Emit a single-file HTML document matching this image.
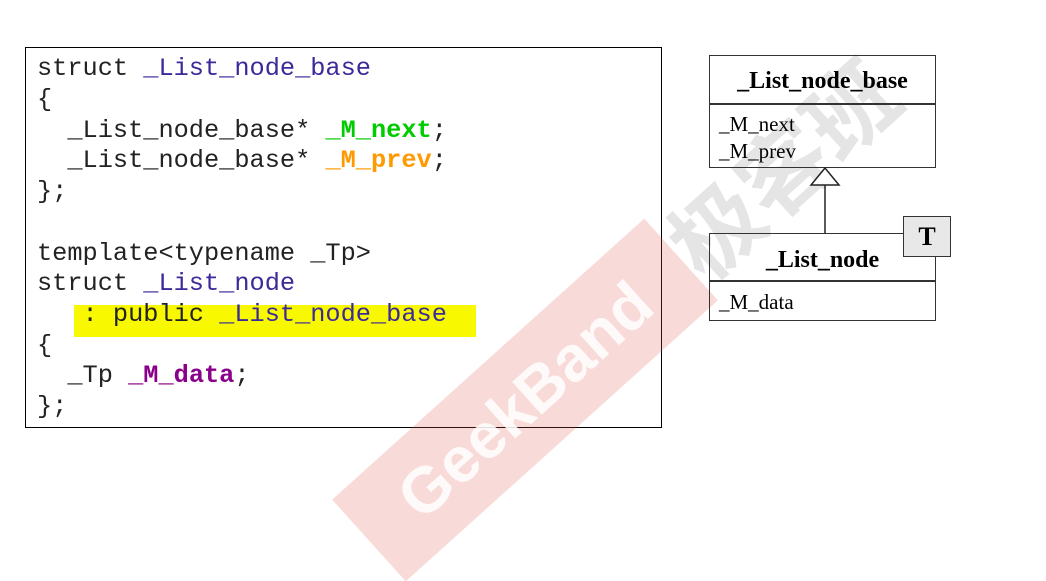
<!DOCTYPE html>
<html><head><meta charset="utf-8"><style>
body{margin:0;width:1046px;height:550px;background:#fff;position:relative;overflow:hidden;font-family:"Liberation Serif",serif}
.code{position:absolute;left:25px;top:47px;width:637px;height:381px;border:1px solid #000;box-sizing:border-box}
.ln{position:absolute;left:37px;font-family:"Liberation Mono",monospace;font-size:25.3px;line-height:30px;white-space:pre;color:#222}
.b{color:#3a2a9a}.g{color:#00cc00;font-weight:bold}.o{color:#ff9900;font-weight:bold}.p{color:#8b008b;font-weight:bold}
.hl{position:absolute;left:74px;top:305px;width:402px;height:32px;background:#f8f800}
.box{position:absolute;border:1.5px solid #333;box-sizing:border-box;background:transparent}
.t{position:absolute;font-size:21px;white-space:nowrap}
</style></head><body>
<div class="hl"></div>
<div class="code"></div>
<div class="ln" style="top:54px">struct <span class="b">_List_node_base</span></div>
<div class="ln" style="top:85px">{</div>
<div class="ln" style="top:116px">  _List_node_base* <span class="g">_M_next</span>;</div>
<div class="ln" style="top:146px">  _List_node_base* <span class="o">_M_prev</span>;</div>
<div class="ln" style="top:177px">};</div>
<div class="ln" style="top:239px">template&lt;typename _Tp&gt;</div>
<div class="ln" style="top:269px">struct <span class="b">_List_node</span></div>
<div class="ln" style="top:300px">   : public <span class="b">_List_node_base</span></div>
<div class="ln" style="top:331px">{</div>
<div class="ln" style="top:361px">  _Tp <span class="p">_M_data</span>;</div>
<div class="ln" style="top:392px">};</div>

<div style="position:absolute;left:315px;top:345px;width:420px;height:110px;background:rgba(225,90,80,0.22);transform:rotate(-42deg);display:flex;align-items:center;justify-content:center;font-family:'Liberation Sans',sans-serif;font-weight:bold;font-size:64px;color:rgba(255,255,255,0.85)">GeekBand</div>
<div style="position:absolute;left:630px;top:100px;width:300px;text-align:center;transform:rotate(-42deg);font-family:'Noto Sans CJK SC',sans-serif;font-weight:bold;font-size:90px;color:rgba(150,150,150,0.25)">极客班</div>

<div class="box" style="left:709px;top:55px;width:227px;height:113px"></div>
<div style="position:absolute;left:709px;top:103px;width:227px;height:1.5px;background:#333"></div>
<div class="t" style="left:709px;width:227px;text-align:center;top:68px;font-weight:bold;font-size:24px">_List_node_base</div>
<div class="t" style="left:719px;top:112px">_M_next</div>
<div class="t" style="left:719px;top:139px">_M_prev</div>
<svg style="position:absolute;left:0;top:0" width="1046" height="550"><polygon points="825,168 811,185 839,185" fill="#fff" stroke="#222" stroke-width="1.5"/><line x1="825" y1="185" x2="825" y2="234" stroke="#222" stroke-width="1.5"/></svg>
<div class="box" style="left:709px;top:233px;width:227px;height:88px"></div>
<div style="position:absolute;left:709px;top:280px;width:227px;height:1.5px;background:#333"></div>
<div class="t" style="left:709px;width:227px;text-align:center;top:247px;font-weight:bold;font-size:24px">_List_node</div>
<div class="t" style="left:719px;top:290px">_M_data</div>
<div class="box" style="left:903px;top:216px;width:48px;height:41px;background:#e8e8e8"></div>
<div class="t" style="left:903px;width:48px;text-align:center;top:222px;font-weight:bold;font-size:26px">T</div>
</body></html>
